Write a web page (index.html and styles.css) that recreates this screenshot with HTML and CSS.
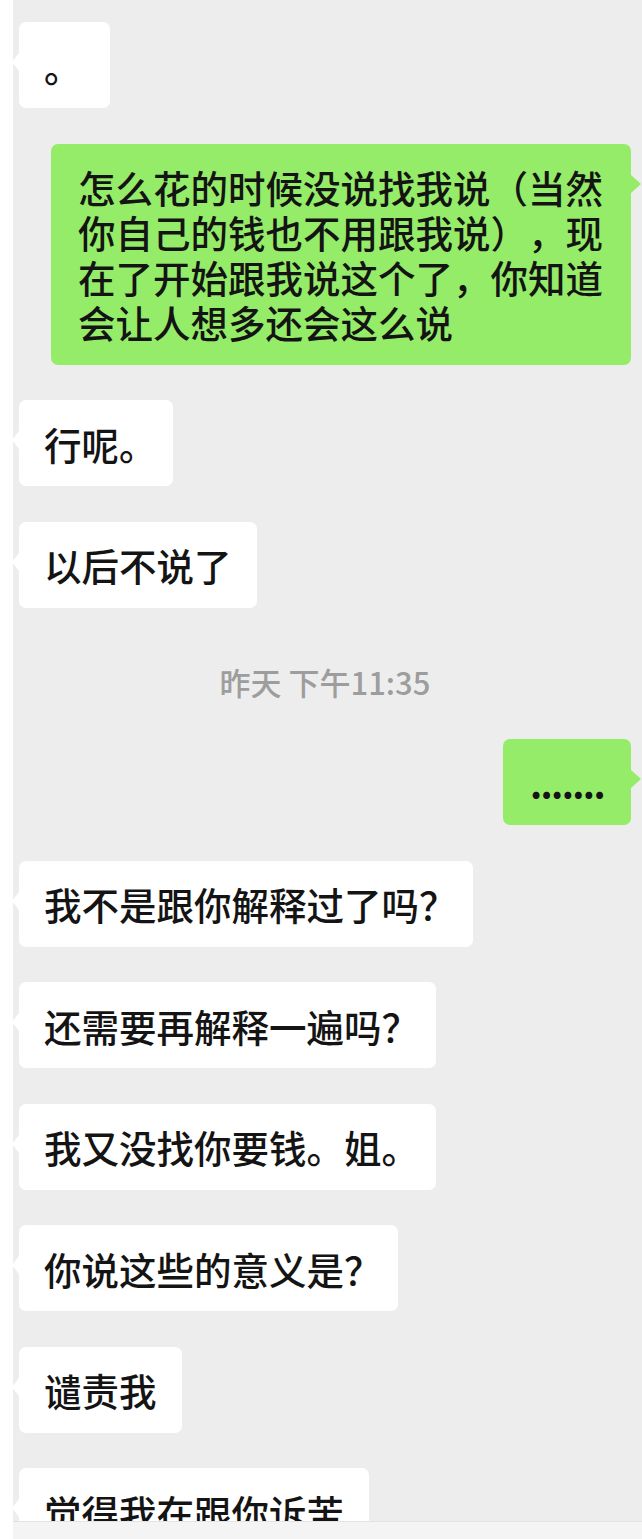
FILE: index.html
```html
<!DOCTYPE html>
<html lang="zh-CN">
<head>
  <meta charset="UTF-8">
  <meta name="viewport" content="width=device-width, initial-scale=1.0">
  <title>聊天记录</title>
  <link rel="stylesheet" href="styles.css">
</head>
<body>
  <div class="screen">
    <div class="chat">
      <div class="msg in"><div class="bubble">。</div></div>
      <div class="msg out"><div class="bubble">怎么花的时候没说找我说（当然你自己的钱也不用跟我说），现在了开始跟我说这个了，你知道会让人想多还会这么说</div></div>
      <div class="msg in"><div class="bubble">行呢<span class="p">。</span></div></div>
      <div class="msg in"><div class="bubble">以后不说了</div></div>
      <div class="time">昨天 下午11:35</div>
      <div class="msg out"><div class="bubble dots">.......</div></div>
      <div class="msg in"><div class="bubble">我不是跟你解释过了吗<span class="p">？</span></div></div>
      <div class="msg in"><div class="bubble">还需要再解释一遍吗<span class="p">？</span></div></div>
      <div class="msg in"><div class="bubble">我又没找你要钱。姐<span class="p">。</span></div></div>
      <div class="msg in"><div class="bubble">你说这些的意义是<span class="p">？</span></div></div>
      <div class="msg in"><div class="bubble">谴责我</div></div>
      <div class="msg in"><div class="bubble">觉得我在跟你诉苦</div></div>
    </div>
    <div class="footer"></div>
  </div>
</body>
</html>
```

FILE: styles.css
```css
* {
  margin: 0;
  padding: 0;
  box-sizing: border-box;
}

body {
  background: #fff;
  font-family: "Noto Sans CJK SC", "Noto Sans", sans-serif;
}

.screen {
  margin-left: 13px;
}

.chat {
  height: 1521px;
  overflow: hidden;
  background: #ededed;
  padding: 22px 11px 0 6px;
  display: flex;
  flex-direction: column;
  gap: 35.5px;
}

.msg {
  display: flex;
}

.msg.out {
  justify-content: flex-end;
}

.bubble {
  position: relative;
  max-width: 580px;
  min-width: 91px;
  padding: 20.5px 25px;
  border-radius: 7px;
  background: #fff;
  color: #141414;
  font-size: 37.5px;
  font-weight: 500;
  line-height: 45px;
  text-spacing-trim: space-all;
}

/* trailing punctuation is set narrower than a full cell in the screenshot */
.bubble .p {
  letter-spacing: -8.5px;
}

.msg.out .bubble {
  background: #95ec69;
  padding-left: 27px;
  padding-right: 27px;
}

.bubble::before {
  content: "";
  position: absolute;
  top: 31px;
  border-top: 9px solid transparent;
  border-bottom: 9px solid transparent;
}

.msg.in .bubble::before {
  left: -7px;
  border-right: 7px solid #fff;
}

.msg.out .bubble::before {
  right: -10px;
  border-left: 10px solid #95ec69;
}

.bubble.dots {
  font-weight: 700;
  letter-spacing: -1.6px;
}

.time {
  padding: 19px 0 1.5px;
  text-align: center;
  color: #9d9d9d;
  font-size: 31px;
  font-weight: 500;
  line-height: 40px;
}

.footer {
  height: 18px;
  background: #f4f4f4;
  border-top: 1px solid #e3e3e3;
}
```
